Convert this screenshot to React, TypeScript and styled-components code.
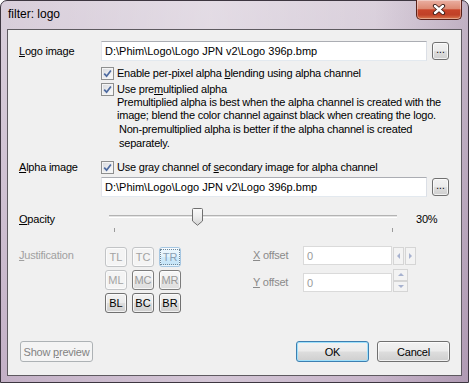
import styled, { createGlobalStyle, css } from 'styled-components';

const GlobalStyle = createGlobalStyle`
  html, body {
    margin: 0;
    padding: 0;
  }
  body {
    width: 469px;
    height: 383px;
    overflow: hidden;
    font-family: "Liberation Sans", Arial, sans-serif;
  }
`;

type Kind = 'normal' | 'default' | 'disabled' | 'faint' | 'dim' | 'hot';

const OPACITY = 30;

export default function App() {
  return (
    <>
      <GlobalStyle />
      <Window>
        <TitleBar>
          <Title>filter: logo</Title>
          <CloseButton>
            <svg width="14" height="11" viewBox="0 0 14 11">
              <path d="M3 2 L11 9 M11 2 L3 9" stroke="#3b1d18" strokeWidth="4.2" strokeLinecap="round" />
              <path d="M3 2 L11 9 M11 2 L3 9" stroke="#ffffff" strokeWidth="2.4" strokeLinecap="round" />
            </svg>
          </CloseButton>
        </TitleBar>

        <Client>
          <FieldRow $top={11}>
            <Label>
              <u>L</u>ogo image
            </Label>
            <TextBox>D:\Phim\Logo\Logo JPN v2\Logo 396p.bmp</TextBox>
            <BrowseButton $kind="normal">...</BrowseButton>
          </FieldRow>

          <FieldRow $top={6} $h={13}>
            <span />
            <Check>
              <CheckBox />
              <span>
                Enable per-pixel alpha <u>b</u>lending using alpha channel
              </span>
            </Check>
          </FieldRow>

          <FieldRow $top={3} $h={13}>
            <span />
            <Check>
              <CheckBox />
              <span>
                Use pre<u>m</u>ultiplied alpha
              </span>
            </Check>
          </FieldRow>

          <Note $lh={13} $indent={16}>
            Premultiplied alpha is best when the alpha channel is created with the
            <br />
            image; blend the color channel against black when creating the logo.
          </Note>
          <Note $lh={14} $indent={18}>
            Non-premultiplied alpha is better if the alpha channel is created
            <br />
            separately.
          </Note>

          <FieldRow $top={11} $h={13}>
            <Label>
              <u>A</u>lpha image
            </Label>
            <Check>
              <CheckBox />
              <span>
                Use gray channel of <u>s</u>econdary image for alpha channel
              </span>
            </Check>
          </FieldRow>

          <FieldRow $top={3}>
            <span />
            <TextBox>D:\Phim\Logo\Logo JPN v2\Logo 396p.bmp</TextBox>
            <BrowseButton $kind="normal">...</BrowseButton>
          </FieldRow>

          <OpacityRow>
            <Label>
              <u>O</u>pacity
            </Label>
            <Slider>
              <Track />
              <Thumb style={{ left: 13 + (278 * OPACITY) / 100 - 5 }}>
                <svg width="11" height="18" viewBox="0 0 11 18">
                  <defs>
                    <linearGradient id="thumb" x1="0" y1="0" x2="0" y2="1">
                      <stop offset="0" stopColor="#fbfbfb" />
                      <stop offset="0.5" stopColor="#ececec" />
                      <stop offset="1" stopColor="#d2d2d2" />
                    </linearGradient>
                  </defs>
                  <path d="M0.5 1.5 Q0.5 0.5 1.5 0.5 H9.5 Q10.5 0.5 10.5 1.5 V13 L5.5 17.3 L0.5 13 Z" fill="url(#thumb)" stroke="#707070" />
                </svg>
              </Thumb>
              <Ticks>
                <Tick />
                <Tick />
              </Ticks>
            </Slider>
            <Percent>{OPACITY}%</Percent>
          </OpacityRow>

          <JustRow>
            <GroupLabel>
              <u>J</u>ustification
            </GroupLabel>
            <AlignGrid>
              <AlignButton $kind="faint">TL</AlignButton>
              <AlignButton $kind="faint">TC</AlignButton>
              <AlignButton $kind="hot">
                <Focus>TR</Focus>
              </AlignButton>
              <AlignButton $kind="faint">ML</AlignButton>
              <AlignButton $kind="dim">MC</AlignButton>
              <AlignButton $kind="dim">MR</AlignButton>
              <AlignButton $kind="normal">BL</AlignButton>
              <AlignButton $kind="normal">BC</AlignButton>
              <AlignButton $kind="normal">BR</AlignButton>
            </AlignGrid>

            <Offsets>
              <OffsetLabel>
                <u>X</u> offset
              </OffsetLabel>
              <OffsetBox>0</OffsetBox>
              <SpinRow>
                <SpinButton $w={11} $h={18}>
                  <Arrow $dir="left" />
                </SpinButton>
                <SpinButton $w={11} $h={18}>
                  <Arrow $dir="right" />
                </SpinButton>
              </SpinRow>

              <OffsetLabel>
                <u>Y</u> offset
              </OffsetLabel>
              <OffsetBox>0</OffsetBox>
              <SpinColumn>
                <SpinButton $w={15} $h={12}>
                  <Arrow $dir="up" />
                </SpinButton>
                <SpinButton $w={15} $h={11}>
                  <Arrow $dir="down" />
                </SpinButton>
              </SpinColumn>
            </Offsets>
          </JustRow>

          <ButtonBar>
            <DialogButton $kind="disabled">
              <span>
                Show <u>p</u>review
              </span>
            </DialogButton>
            <Spacer />
            <DialogButton $kind="default">OK</DialogButton>
            <DialogButton $kind="normal">Cancel</DialogButton>
          </ButtonBar>
        </Client>
      </Window>
    </>
  );
}

function CheckBox() {
  return (
    <Box>
      <svg width="9" height="9" viewBox="0 0 9 9">
        <path d="M1.2 4.6 L3.6 7.2 L7.9 1.4" fill="none" stroke="#4d6aa0" strokeWidth="1.7" />
      </svg>
    </Box>
  );
}

const Window = styled.div`
  display: flex;
  flex-direction: column;

  width: 469px;
  height: 383px;

  border: 1px solid #3d3640;
  border-radius: 7px 7px 0 0;
  box-sizing: border-box;

  background:
    linear-gradient(90deg, rgba(255, 255, 255, 0) 0%, rgba(255, 255, 255, 0.28) 45%, rgba(255, 255, 255, 0.05) 80%, rgba(120, 90, 125, 0.25) 100%),
    linear-gradient(180deg, #d9cfdb 0%, #cfc1d2 50%, #c3b0c6 100%);
`;

const TitleBar = styled.div`
  display: flex;
  align-items: flex-start;

  height: 28px;
`;

const Title = styled.span`
  padding: 6px 0 0 7px;

  font-size: 12px;
  line-height: 14px;
  color: #000;
`;

const CloseButton = styled.div`
  display: flex;
  align-items: center;
  justify-content: center;

  width: 46px;
  height: 20px;
  margin: -1px 6px 0 auto;

  border: 1px solid #5a2219;
  border-top: none;
  border-radius: 0 0 5px 5px;
  box-sizing: border-box;

  background: linear-gradient(180deg, #eab0a2 0%, #dd8a73 45%, #c8452a 52%, #c04127 78%, #d9794f 100%);
  box-shadow: inset 0 0 0 1px rgba(255, 255, 255, 0.35);
`;

const Client = styled.div`
  display: flex;
  flex-direction: column;

  height: 347px;
  margin: 0 6px 6px;
  padding: 0 11px 13px 11px;

  border: 1px solid #5e5a60;
  box-sizing: border-box;
  background: #f0f0f0;

  font-size: 11px;
  letter-spacing: -0.22px;
  color: #000;
`;

const FieldRow = styled.div<{ $top: number; $h?: number }>`
  display: grid;
  grid-template-columns: 77px 326px 17px;
  column-gap: 5px;
  align-items: center;

  height: ${(p) => p.$h ?? 20}px;
  margin-top: ${(p) => p.$top}px;
`;

const Label = styled.span`
  line-height: 13px;
  white-space: nowrap;
`;

const TextBox = styled.div`
  display: flex;
  align-items: center;

  height: 20px;
  padding-left: 3px;

  border: 1px solid;
  border-color: #abadb3 #dbdfe6 #e3e9ef #e2e3ea;
  box-sizing: border-box;
  background: #fff;

  letter-spacing: 0;
  white-space: nowrap;
  overflow: hidden;
`;

const Check = styled.label`
  grid-column: 2 / 4;
  display: flex;
  align-items: center;
  column-gap: 3px;

  line-height: 13px;
  white-space: nowrap;
`;

const Box = styled.span`
  display: flex;
  align-items: center;
  justify-content: center;
  flex: none;

  width: 13px;
  height: 13px;

  border: 1px solid #8e8f8f;
  box-sizing: border-box;
  background: linear-gradient(135deg, #d6d8dc 0%, #eeeff1 60%, #fbfbfb 100%);
  box-shadow: inset 0 0 0 1px #f4f4f4;
`;

const Note = styled.p<{ $lh: number; $indent: number }>`
  margin: 0;
  padding-left: ${(p) => 82 + p.$indent}px;

  line-height: ${(p) => p.$lh}px;
  white-space: nowrap;
`;

const looks: Record<Kind, ReturnType<typeof css>> = {
  normal: css`
    border-color: #707070;
    color: #000;
    background: linear-gradient(180deg, #f2f2f2 0%, #ebebeb 48%, #dddddd 52%, #cfcfcf 100%);
    box-shadow: inset 0 0 0 1px rgba(255, 255, 255, 0.7);
  `,
  default: css`
    border-color: #3c7fb1;
    color: #000;
    background: linear-gradient(180deg, #f2f2f2 0%, #ebebeb 48%, #dddddd 52%, #cfcfcf 100%);
    box-shadow: inset 0 0 0 1px #9fe0fb;
  `,
  disabled: css`
    border-color: #adb2b5;
    color: #838383;
    background: #f4f4f4;
  `,
  faint: css`
    border-color: #c2c4c6;
    color: #a3a3a3;
    background: #f4f4f4;
    box-shadow: inset 0 0 0 1px #fbfbfb;
  `,
  dim: css`
    border-color: #7c7c7c;
    color: #999;
    background: linear-gradient(180deg, #f7f7f7 0%, #f0f0f0 48%, #e6e6e6 52%, #dedede 100%);
    box-shadow: inset 0 0 0 1px rgba(255, 255, 255, 0.7);
  `,
  hot: css`
    border-color: #a6c7e2;
    color: #8aa0b4;
    background: linear-gradient(180deg, #eef7fd 0%, #e2f2fc 48%, #cfeafb 52%, #c3e3f6 100%);
    box-shadow: inset 0 0 0 1px rgba(255, 255, 255, 0.6);
  `,
};

const PushButton = styled.button<{ $kind: Kind }>`
  display: flex;
  align-items: center;
  justify-content: center;

  margin: 0;
  padding: 0;

  border: 1px solid;
  border-radius: 3px;
  box-sizing: border-box;

  font-family: inherit;
  font-size: 11px;
  letter-spacing: -0.22px;
  white-space: nowrap;

  ${(p) => looks[p.$kind]}
`;

const BrowseButton = styled(PushButton)`
  width: 17px;
  height: 18px;
  padding-bottom: 3px;

  font-size: 10px;
  letter-spacing: 0;
`;

const OpacityRow = styled.div`
  display: grid;
  grid-template-columns: 77px 304px auto;
  column-gap: 5px;
  align-items: center;

  height: 24px;
  margin-top: 10px;
`;

const Slider = styled.div`
  position: relative;

  height: 24px;
`;

const Track = styled.div`
  height: 3px;
  margin: 8px 8px 0;

  border-top: 1px solid #b3b3b3;
  border-bottom: 1px solid #ffffff;
  box-sizing: border-box;
  background: #e3e3e3;
`;

const Thumb = styled.div`
  position: absolute;
  top: 1px;

  width: 11px;
  height: 18px;

  svg {
    display: block;
  }
`;

const Ticks = styled.div`
  display: flex;
  justify-content: space-between;

  margin-top: 10px;
  padding: 0 12px 0 13px;
`;

const Tick = styled.span`
  width: 1px;
  height: 4px;

  background: #9a9a9a;
`;

const Percent = styled.span`
  padding-left: 6px;

  line-height: 13px;
`;

const JustRow = styled.div`
  display: flex;
  align-items: flex-start;

  margin-top: 16px;
`;

const GroupLabel = styled.span`
  width: 86px;
  padding-top: 2px;

  line-height: 13px;
  color: #a0a0a0;
`;

const AlignGrid = styled.div`
  display: grid;
  grid-template-columns: repeat(3, 22px);
  grid-template-rows: repeat(3, 20px);
  column-gap: 5px;
  row-gap: 3px;
`;

const AlignButton = styled(PushButton)`
  width: 22px;
  height: 20px;

  font-size: 11px;
  letter-spacing: 0;
`;

const Focus = styled.span`
  padding: 1px 2px;

  outline: 1px dotted #6f8799;
`;

const Offsets = styled.div`
  display: grid;
  grid-template-columns: 50px 89px auto;
  grid-template-rows: 19px 19px;
  row-gap: 8px;
  align-items: center;

  margin: -1px 0 0 72px;
`;

const OffsetLabel = styled.span`
  line-height: 13px;
  color: #8a8a8a;
`;

const OffsetBox = styled.div`
  display: flex;
  align-items: center;

  height: 19px;
  padding-left: 3px;

  border: 1px solid #dadada;
  box-sizing: border-box;
  background: #fff;

  color: #9a9a9a;
`;

const SpinRow = styled.div`
  display: flex;
  column-gap: 1px;

  margin-left: 1px;
`;

const SpinColumn = styled.div`
  display: flex;
  flex-direction: column;

  margin: -5px 0 0 1px;
`;

const SpinButton = styled.span<{ $w: number; $h: number }>`
  display: flex;
  align-items: center;
  justify-content: center;

  width: ${(p) => p.$w}px;
  height: ${(p) => p.$h}px;

  border: 1px solid #d5d5d5;
  box-sizing: border-box;
  background: #f3f3f3;
`;

const arrowShapes = {
  left: css`
    border-width: 3px 3px 3px 0;
    border-color: transparent #a7b2cf transparent transparent;
  `,
  right: css`
    border-width: 3px 0 3px 3px;
    border-color: transparent transparent transparent #a7b2cf;
  `,
  up: css`
    border-width: 0 3.5px 3px;
    border-color: transparent transparent #a7b2cf transparent;
  `,
  down: css`
    border-width: 3px 3.5px 0;
    border-color: #a7b2cf transparent transparent transparent;
  `,
};

const Arrow = styled.span<{ $dir: keyof typeof arrowShapes }>`
  width: 0;
  height: 0;

  border-style: solid;

  ${(p) => arrowShapes[p.$dir]}
`;

const ButtonBar = styled.div`
  display: flex;
  column-gap: 8px;

  margin-top: auto;
  padding: 0 0 0 1px;
`;

const Spacer = styled.span`
  flex: 1;
`;

const DialogButton = styled(PushButton)`
  width: 73px;
  height: 21px;
`;
